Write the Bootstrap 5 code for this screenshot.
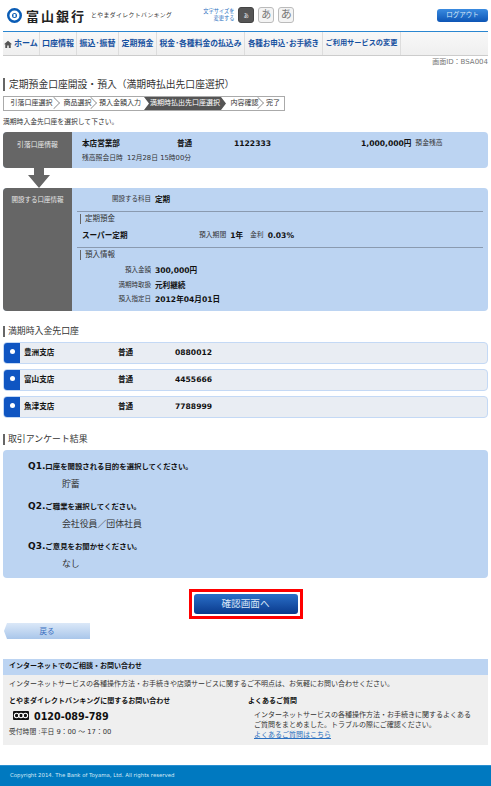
<!DOCTYPE html>
<html lang="ja">
<head>
<meta charset="utf-8">
<link href="https://cdn.jsdelivr.net/npm/bootstrap@5.3.3/dist/css/bootstrap.min.css" rel="stylesheet">
<script src="https://cdn.jsdelivr.net/npm/bootstrap@5.3.3/dist/js/bootstrap.bundle.min.js"></script>
<style>
  body { font-family: "DejaVu Sans", "Noto Sans CJK JP", sans-serif; font-size: 6.8px; line-height: 1.2; color: #333; background: #fff; width: 491px; height: 786px; overflow: hidden; }
  b, strong { font-weight: 700; color: #111; }

  /* header */
  .top-head { height: 31px; padding: 0 3px 0 7px; }
  .brand-box { padding-top: 8px; }
  .bank-logo { width: 15px; height: 15px; }
  .bank-name { font-family: "Noto Sans CJK JP", serif; font-size: 13px; font-weight: 700; letter-spacing: 2px; color: #222; margin-left: 4px; line-height: 15px; white-space: nowrap; }
  .bank-tag { font-size: 5.8px; letter-spacing: .45px; color: #333; margin-left: 5px; margin-top: 4px; white-space: nowrap; }
  .size-box { padding-top: 7px; }
  .size-label { font-size: 5.2px; line-height: 7px; color: #2a6fc0; text-align: right; width: 35px; margin-left: 27px; }
  .size-btn { width: 16px; height: 16px; border: 1px solid #bbb; border-radius: 3px; background: #f4f4f4; color: #777; display: flex; align-items: center; justify-content: center; margin-left: 4px; font-size: 10px; }
  .size-btn.on { background: #555; border-color: #444; color: #fff; font-size: 5px; }
  .size-btn.lg { font-size: 11px; }
  .logout-btn { width: 51px; height: 13px; margin-top: 9px; border-radius: 3px; background: linear-gradient(#3a8be0, #0d55b5); color: #dce9f8; font-size: 6.5px; display: flex; align-items: center; justify-content: center; }

  /* global nav */
  .gnav { margin: 0 3px; height: 25px; border-top: 1px solid #2a86d0; border-bottom: 1px solid #ccc; background: linear-gradient(#f8f8f8, #efefef); }
  .gnav-item { height: 100%; border-right: 1px solid #ddd; color: #14509f; font-size: 8px; font-weight: 700; white-space: nowrap; display: flex; align-items: center; justify-content: center; }
  .gnav-item svg { margin-right: 2px; }
  .w37 { width: 37px; }
  .w42 { width: 42px; }
  .w38 { width: 38px; }
  .w88 { width: 88px; }
  .w78 { width: 78px; }
  .fs-78 { font-size: 7.8px; }
  .fs-75 { font-size: 7.5px; }
  .fs-72 { font-size: 7.2px; }

  .screen-id { text-align: right; font-size: 7px; color: #777; padding-right: 3px; height: 13px; line-height: 13px; }
  .page-title { margin: 9px 3px 0; height: 13px; border-left: 2px solid #666; padding-left: 4px; font-size: 9.8px; line-height: 13px; color: #333; white-space: nowrap; }

  /* step trail */
  .steps { margin: 5px 0 0 3px; width: 282px; height: 15px; border: 1px solid #aaa; overflow: hidden; }
  .step { height: 100%; font-size: 7px; color: #333; display: flex; align-items: center; justify-content: center; white-space: nowrap; position: relative; }
  .step:not(.now):not(:last-child):not(.before-now)::after { content: ""; position: absolute; right: 0; top: 1px; width: 10px; height: 10px; border-top: 1px solid #999; border-right: 1px solid #999; transform: rotate(45deg) scale(.85); }
  .step.now { background: #555; color: #fff; clip-path: polygon(0 0, calc(100% - 5px) 0, 100% 50%, calc(100% - 5px) 100%, 0 100%, 5px 50%); }
  .st-55 { width: 55px; }
  .st-37 { width: 37px; }
  .st-48 { width: 48px; }
  .st-82 { width: 82px; }
  .st-20 { width: 20px; }
  .lead-note { margin: 6px 3px 0; height: 10px; line-height: 10px; }

  /* info panels */
  .info-panel { margin: 5px 3px 0; background: #bcd4f2; border-radius: 4px; overflow: hidden; }
  .panel-from { height: 36px; }
  .panel-new { height: 123px; margin-top: 0; }
  .info-side { width: 69px; flex: none; background: #666; color: #e8e8e8; text-align: center; padding-top: 9px; }
  .side-narrow { font-size: 6.5px; }
  .info-body { padding: 6px 0 0 10px; }
  .new-body { padding-top: 6px; }
  .down-arrow { display: block; margin-left: 28px; height: 20px; width: 22px; }
  .acct-label { color: #333; }
  .label-col { width: 83px; flex: none; text-align: right; font-size: 6.5px; padding-right: 4px; color: #333; }
  .val { font-size: 7.6px; font-weight: 700; color: #111; }
  .val-row { height: 11px; }
  .v-95 { width: 95px; }
  .v-57 { width: 57px; }
  .v-127 { width: 127px; }
  .v-117 { width: 117px; }
  .gap-l { margin-left: 7px; }
  .date-line { margin-top: 4px; line-height: 11px; }
  .sub-head { border-top: 1px solid #8a9ab0; margin: 6px 5px 0; padding-top: 2px; }
  .sub-title { border-left: 1px solid #666; margin-left: 3px; padding-left: 4px; font-size: 7.5px; line-height: 10px; color: #333; }
  .sub-first { margin: 6px 0 0 5px; }
  .row-a { margin: 5px 0 0 -5px; }
  .row-b { margin: 4px 0 0 -5px; }
  .row-c { margin: 3px 0 0 -5px; }

  .sec-head { margin: 15px 3px 5px; height: 11px; border-left: 2px solid #666; padding-left: 3px; font-size: 8.9px; line-height: 11px; color: #333; white-space: nowrap; }
  .sec-head.next { margin-top: 16px; }

  /* account choices */
  .acct-row { margin: 0 3px 5px; height: 22px; background: #e9edf3; border: 1px solid #c4d9f5; border-radius: 4px; overflow: hidden; }
  .acct-radio { width: 16px; flex: none; background: #0f55c2; padding-top: 6px; display: flex; justify-content: center; align-items: flex-start; }
  .acct-radio i { display: block; width: 5px; height: 5px; border-radius: 50%; background: #fff; }
  .acct-cols { padding-left: 4px; }
  .acct-row b { font-size: 7.6px; }
  .c-94 { width: 94px; }

  /* survey */
  .survey { margin: 0 3px; height: 128px; background: #bcd4f2; border-radius: 4px; padding: 10px 0 0 25px; }
  .q-line { font-size: 7.4px; font-weight: 700; color: #111; height: 12px; line-height: 12px; white-space: nowrap; }
  .q-line span { font-size: 9px; }
  .a-line { font-size: 8.9px; color: #333; padding-left: 34px; height: 12px; line-height: 12px; margin: 5.5px 0 10.5px; }

  /* buttons */
  .submit-wrap { margin-top: 11px; }
  .submit-frame { border: 3px solid #f00; padding: 2px; width: 114px; height: 30px; }
  .submit-btn { width: 100%; height: 100%; border-radius: 3px; background: linear-gradient(#2a6fc8, #0a3a8c); color: #dbe8f8; font-size: 9.6px; display: flex; align-items: center; justify-content: center; }
  .back-btn { margin: 4px 0 0 4px; width: 86px; height: 16px; background: linear-gradient(#dbe8f8, #a9c6ea); color: #3a6fc0; font-size: 7.5px; clip-path: polygon(3px 0, 100% 0, 100% 100%, 3px 100%, 0 50%); display: flex; align-items: center; justify-content: center; }

  /* help block */
  .help { margin: 20px 3px 0; height: 86px; background: #efefef; }
  .help-head { height: 16px; background: #bcd4f2; padding-left: 6px; font-size: 7px; font-weight: 700; line-height: 15px; color: #111; }
  .help-note { padding: 4px 0 0 6px; height: 21px; font-size: 7px; line-height: 10px; white-space: nowrap; }
  .help-l { width: 245px; flex: none; padding-left: 6px; }
  .help-h { font-size: 7px; font-weight: 700; color: #111; line-height: 10px; white-space: nowrap; }
  .tel-row { margin: 3px 0 0 4px; height: 14px; }
  .tel-num { font-size: 9.6px; font-weight: 700; color: #111; line-height: 13px; margin-left: 5px; }
  .tel-hours { margin-top: 4px; line-height: 10px; }
  .help-text { margin: 4px 0 0 6px; line-height: 10px; font-size: 7px; white-space: nowrap; }
  .help-link { color: #2a6fc0; text-decoration: underline; }
  .copy-bar { margin-top: 20px; height: 21px; background: #0079c0; border-top: 1px solid #2a8fd0; color: #d5e9f6; font-size: 5.4px; line-height: 19px; padding-left: 10px; }
</style>
</head>
<body>

<div class="top-head d-flex align-items-start">
  <div class="brand-box d-flex align-items-start">
    <svg class="bank-logo" viewBox="0 0 30 30"><circle cx="15" cy="15" r="12.5" fill="none" stroke="#0a5cb5" stroke-width="5"/><circle cx="15" cy="15" r="5" fill="#0a5cb5"/><rect x="13" y="12" width="4" height="6" fill="#fff"/></svg>
    <span class="bank-name">富山銀行</span>
    <span class="bank-tag">とやまダイレクトバンキング</span>
  </div>
  <div class="size-box d-flex align-items-center">
    <div class="size-label">文字サイズを<br>変更する</div>
    <div class="size-btn on">あ</div>
    <div class="size-btn">あ</div>
    <div class="size-btn lg">あ</div>
  </div>
  <div class="logout-btn ms-auto">ログアウト</div>
</div>

<div class="gnav d-flex">
  <div class="gnav-item w37"><svg width="8" height="8" viewBox="0 0 10 10"><path d="M5 .8 0 5.4h1.6V10h2.4V7h2v3h2.4V5.4H10z" fill="#555"/></svg>ホーム</div>
  <div class="gnav-item w37">口座情報</div>
  <div class="gnav-item w42">振込･振替</div>
  <div class="gnav-item w38">定期預金</div>
  <div class="gnav-item w88 fs-78">税金･各種料金の払込み</div>
  <div class="gnav-item w78 fs-75">各種お申込･お手続き</div>
  <div class="gnav-item w78 fs-72">ご利用サービスの変更</div>
</div>

<div class="screen-id">画面ID：BSA004</div>
<div class="page-title">定期預金口座開設・預入（満期時払出先口座選択）</div>

<div class="steps d-flex">
  <div class="step st-55">引落口座選択</div>
  <div class="step st-37">商品選択</div>
  <div class="step st-48 before-now">預入金額入力</div>
  <div class="step now st-82">満期時払出先口座選択</div>
  <div class="step st-37">内容確認</div>
  <div class="step st-20">完了</div>
</div>
<div class="lead-note">満期時入金先口座を選択して下さい。</div>

<div class="info-panel panel-from d-flex">
  <div class="info-side">引落口座情報</div>
  <div class="info-body flex-fill">
    <div class="val-row d-flex align-items-center">
      <b class="val v-95">本店営業部</b>
      <b class="val v-57">普通</b>
      <b class="val v-127">1122333</b>
      <b class="val">1,000,000円</b>
      <span class="acct-label ms-1">預金残高</span>
    </div>
    <div class="acct-label date-line">残高照会日時&nbsp; 12月28日 15時00分</div>
  </div>
</div>

<svg class="down-arrow" viewBox="0 0 22 20"><path d="M6 0h10v7h6L11 20 0 7h6z" fill="#666"/></svg>

<div class="info-panel panel-new d-flex">
  <div class="info-side side-narrow">開設する口座情報</div>
  <div class="new-body flex-fill">
    <div class="val-row d-flex align-items-center"><span class="label-col">開設する科目</span><b class="val">定期</b></div>
    <div class="sub-head">
      <div class="sub-title">定期預金</div>
      <div class="val-row sub-first d-flex align-items-center">
        <b class="val v-117">スーパー定期</b>
        <span class="acct-label">預入期間</span><b class="val ms-1">1年</b>
        <span class="acct-label gap-l">金利</span><b class="val ms-1">0.03%</b>
      </div>
    </div>
    <div class="sub-head">
      <div class="sub-title">預入情報</div>
      <div class="val-row row-a d-flex align-items-center"><span class="label-col">預入金額</span><b class="val">300,000円</b></div>
      <div class="val-row row-b d-flex align-items-center"><span class="label-col">満期時取扱</span><b class="val">元利継続</b></div>
      <div class="val-row row-c d-flex align-items-center"><span class="label-col">預入指定日</span><b class="val">2012年04月01日</b></div>
    </div>
  </div>
</div>

<div class="sec-head">満期時入金先口座</div>
<div class="acct-row d-flex"><div class="acct-radio"><i></i></div><div class="acct-cols d-flex align-items-center"><b class="c-94">豊洲支店</b><b class="v-57">普通</b><b>0880012</b></div></div>
<div class="acct-row d-flex"><div class="acct-radio"><i></i></div><div class="acct-cols d-flex align-items-center"><b class="c-94">富山支店</b><b class="v-57">普通</b><b>4455666</b></div></div>
<div class="acct-row d-flex"><div class="acct-radio"><i></i></div><div class="acct-cols d-flex align-items-center"><b class="c-94">魚津支店</b><b class="v-57">普通</b><b>7788999</b></div></div>

<div class="sec-head next">取引アンケート結果</div>
<div class="survey">
  <div class="q-line"><span>Q1.</span>口座を開設される目的を選択してください。</div>
  <div class="a-line">貯蓄</div>
  <div class="q-line"><span>Q2.</span>ご職業を選択してください。</div>
  <div class="a-line">会社役員／団体社員</div>
  <div class="q-line"><span>Q3.</span>ご意見をお聞かせください。</div>
  <div class="a-line">なし</div>
</div>

<div class="submit-wrap d-flex justify-content-center">
  <div class="submit-frame"><div class="submit-btn">確認画面へ</div></div>
</div>
<div class="back-btn">戻る</div>

<div class="help">
  <div class="help-head">インターネットでのご相談・お問い合わせ</div>
  <div class="help-note">インターネットサービスの各種操作方法・お手続きや店頭サービスに関するご不明点は、お気軽にお問い合わせください。</div>
  <div class="d-flex">
    <div class="help-l">
      <div class="help-h">とやまダイレクトバンキングに関するお問い合わせ</div>
      <div class="tel-row d-flex align-items-center">
        <svg width="16" height="10" viewBox="0 0 16 10"><rect width="16" height="9" rx="1" fill="#111"/><circle cx="3.6" cy="4.5" r="2.2" fill="none" stroke="#fff" stroke-width="1.1"/><circle cx="8" cy="4.5" r="2.2" fill="none" stroke="#fff" stroke-width="1.1"/><circle cx="12.4" cy="4.5" r="2.2" fill="none" stroke="#fff" stroke-width="1.1"/></svg>
        <span class="tel-num">0120-089-789</span>
      </div>
      <div class="tel-hours">受付時間 :平日 9：00 ～ 17：00</div>
    </div>
    <div class="flex-fill">
      <div class="help-h">よくあるご質問</div>
      <div class="help-text">インターネットサービスの各種操作方法・お手続きに関するよくある<br>ご質問をまとめました。トラブルの際にご確認ください。<br><span class="help-link">よくあるご質問はこちら</span></div>
    </div>
  </div>
</div>

<div class="copy-bar">Copyright 2014. The Bank of Toyama, Ltd. All rights reserved</div>

</body>
</html>
